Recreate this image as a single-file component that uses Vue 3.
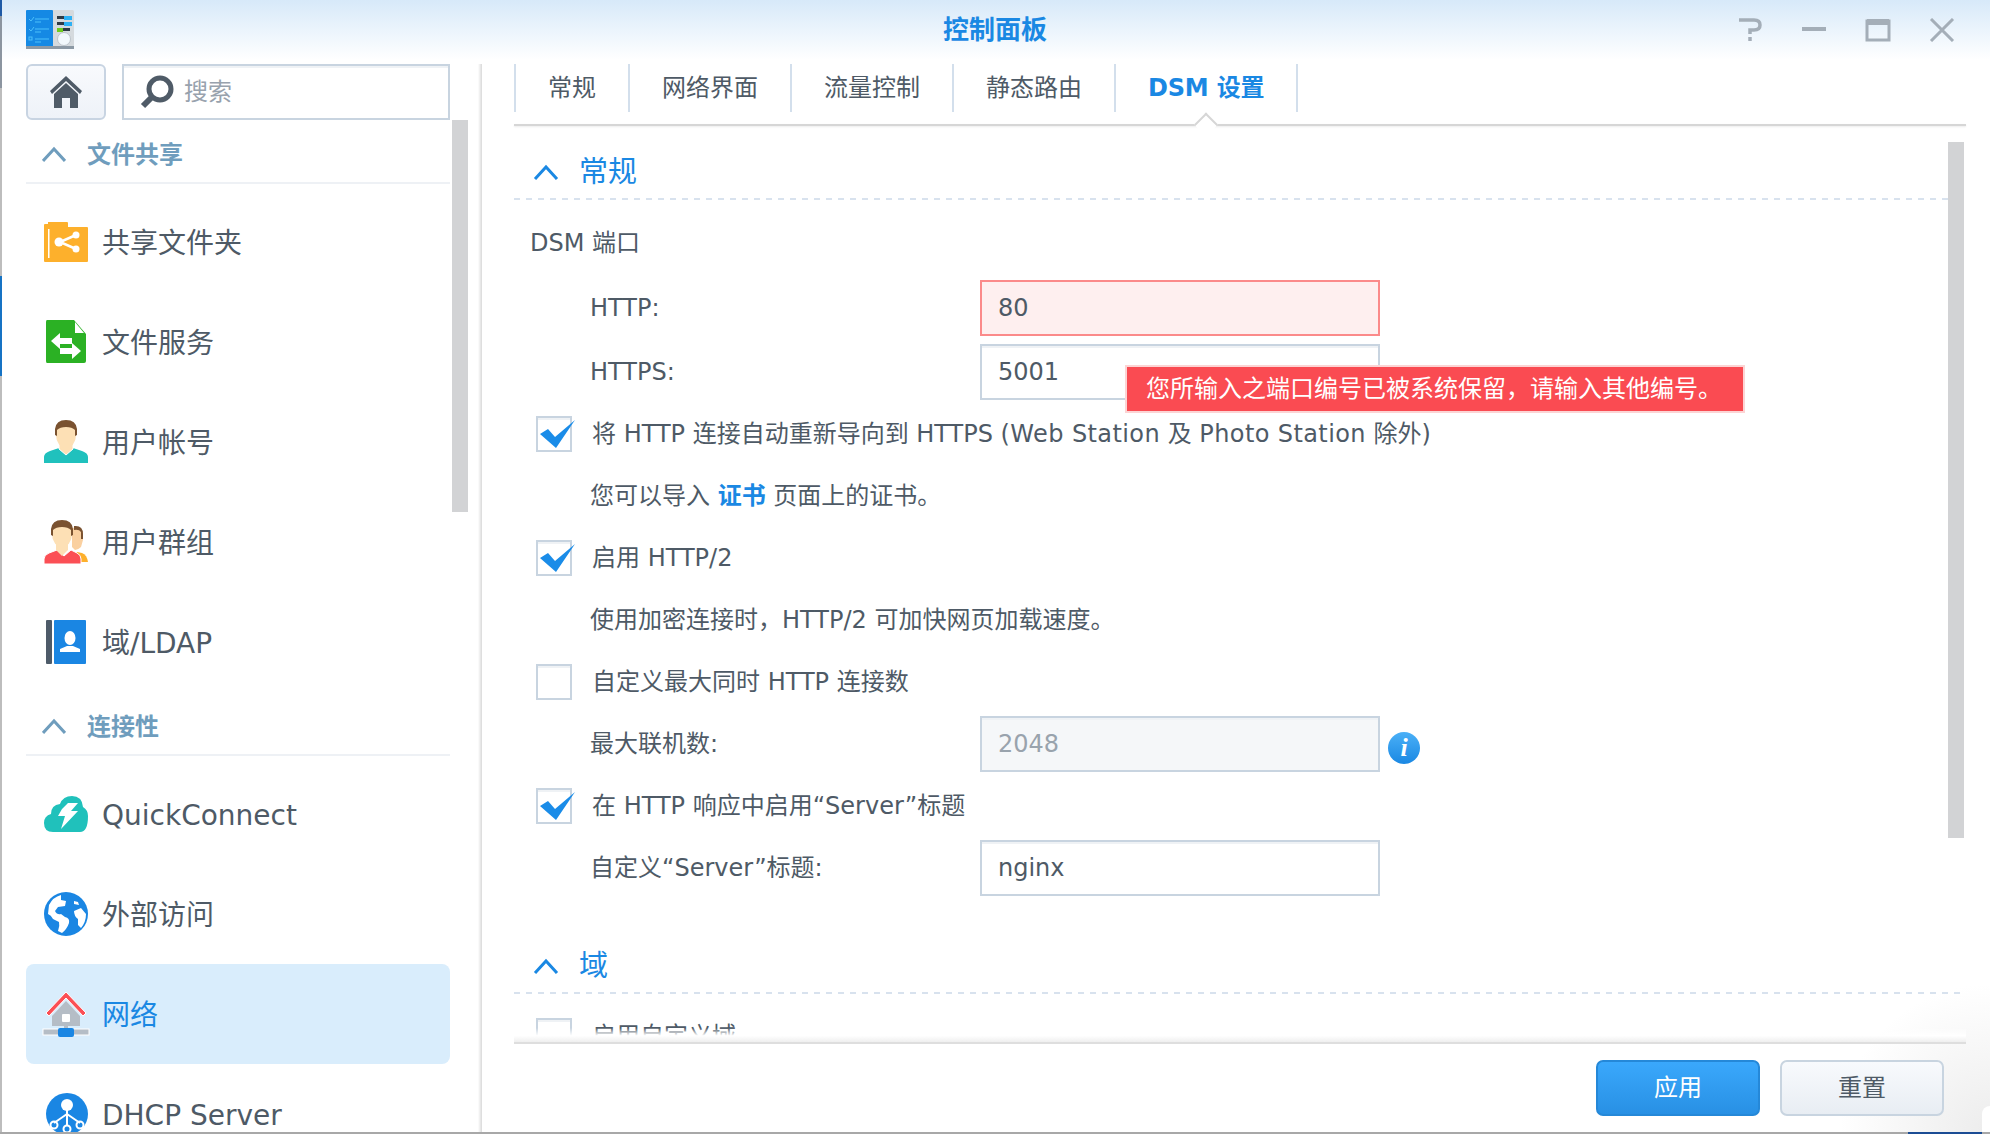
<script setup>
const groups = [
  {
    title: "文件共享",
    items: [
      { icon: "share", label: "共享文件夹" },
      { icon: "file", label: "文件服务" },
      { icon: "user", label: "用户帐号" },
      { icon: "group", label: "用户群组" },
      { icon: "ldap", label: "域/LDAP" },
    ],
  },
  {
    title: "连接性",
    items: [
      { icon: "quick", label: "QuickConnect" },
      { icon: "globe", label: "外部访问" },
      { icon: "network", label: "网络", active: true },
      { icon: "dhcp", label: "DHCP Server" },
    ],
  },
];

const tabs = ["常规", "网络界面", "流量控制", "静态路由", "DSM 设置"];
</script>

<template>
  <div class="window">
    <header class="titlebar">
      <div class="titlebar__left">
        <svg class="app-icon" width="48" height="40" viewBox="0 0 48 40">
          <rect x="0" y="0" width="48" height="39" rx="1.5" fill="#d5dade" />
          <rect x="0" y="0" width="27" height="39" rx="1" fill="#1589e4" />
          <rect x="0" y="36" width="48" height="3" fill="#8c99a5" />
          <g stroke="#4cc0fa" stroke-width="1" fill="none">
            <path d="M3 9l2 2 3-4M3 19l2 2 3-4" />
            <rect x="3" y="27" width="3" height="3" />
            <path d="M9 9h14M9 12h6M9 19h14M9 22h6M9 29h14M9 32h6" />
          </g>
          <rect x="31" y="6" width="13" height="3" fill="#2f3a45" />
          <rect x="38" y="6" width="8" height="4" fill="#2db1f5" />
          <rect x="31" y="12" width="13" height="3" fill="#2f3a45" />
          <rect x="38" y="12" width="8" height="4" fill="#2db1f5" />
          <rect x="31" y="18" width="13" height="3" fill="#2f3a45" />
          <rect x="31" y="18" width="6" height="4" fill="#6ecb1f" />
          <circle cx="38" cy="29" r="6.5" fill="#f2f8fc" stroke="#bcc4cb" />
        </svg>
      </div>
      <h1 class="titlebar__title">控制面板</h1>
      <div class="titlebar__controls">
        <svg width="26" height="24" viewBox="0 0 26 24" fill="none" stroke="#a4aeb8" stroke-width="3.5">
          <path d="M2 2h15q6 0 6 5t-6 5h-4v4" />
          <path d="M13 19v4" />
        </svg>
        <svg width="26" height="24" viewBox="0 0 26 24" fill="none" stroke="#a4aeb8" stroke-width="4">
          <path d="M1 11h24" />
        </svg>
        <svg width="26" height="24" viewBox="0 0 26 24" fill="none" stroke="#a4aeb8">
          <rect x="2" y="3" width="22" height="19" stroke-width="3" />
          <path d="M2 4h22" stroke-width="6" />
        </svg>
        <svg width="26" height="24" viewBox="0 0 26 24" fill="none" stroke="#a4aeb8" stroke-width="3">
          <path d="M2 1l22 22M24 1L2 23" />
        </svg>
      </div>
    </header>

    <div class="body">
      <aside class="sidebar">
        <div class="sidebar__head">
          <button class="home-btn">
            <svg width="32" height="32" viewBox="0 0 32 32">
              <path d="M16 0L32 15l-2 3L16 5 2 18l-2-3z" fill="#4f5b67" />
              <path d="M4 18L16 7l12 11v14H20V22h-8v10H4z" fill="#4f5b67" />
            </svg>
          </button>
          <div class="search">
            <svg width="34" height="34" viewBox="0 0 34 34" fill="none" stroke="#4f5b67">
              <circle cx="20" cy="14" r="11" stroke-width="5" />
              <path d="M11 23L3 31" stroke-width="6" />
            </svg>
            <span>搜索</span>
          </div>
        </div>
        <div class="scrollbar scrollbar--side"></div>
        <div class="nav">
          <section v-for="group in groups" :key="group.title">
            <div class="nav__title">
              <svg width="24" height="16" viewBox="0 0 24 16" fill="none" stroke="#6f9dbd" stroke-width="3">
                <path d="M1 15L12 3l11 12" />
              </svg>
              <span>{{ group.title }}</span>
            </div>
            <div class="nav__items">
              <div v-for="item in group.items" :key="item.label" class="nav-item" :class="{ 'nav-item--active': item.active }">
                <svg class="nav-item__icon" width="44" height="44" viewBox="0 0 44 44">
                  <template v-if="item.icon === 'share'">
                    <path d="M1 4h3V2h19q1 0 1 1v4h19q1 0 1 1v33q0 1-1 1H1q-1 0-1-1V5q0-1 1-1z" fill="#fdb02c" />
                    <rect x="4" y="9" width="1.5" height="29" fill="#fff" />
                    <path d="M32 15L16 22l16 7" stroke="#fff" stroke-width="2.5" fill="none" />
                    <circle cx="15" cy="22" r="4.5" fill="#fff" />
                    <circle cx="32" cy="15" r="3.5" fill="#fff" />
                    <circle cx="32" cy="29" r="3.5" fill="#fff" />
                  </template>
                  <template v-else-if="item.icon === 'file'">
                    <path d="M3 0h27l12 14v27q0 2-2 2H3q-1 0-1-2V2q0-2 1-2z" fill="#2bb124" />
                    <path d="M31 2l9 11h-9z" fill="#fff" />
                    <path d="M7 21l9-8v5h12v6H16v5zM37 31l-9-8v5H16v6h12v5z" fill="#fff" />
                  </template>
                  <template v-else-if="item.icon === 'user'">
                    <path d="M0 43v-6q0-4 6-6l9-3 7 6 7-6 9 3q6 2 6 6v6z" fill="#20c1bd" />
                    <path d="M15 22h14v7l-7 6-7-6z" fill="#fde0b5" stroke="#fff" stroke-width="1" />
                    <ellipse cx="22" cy="15" rx="10" ry="13" fill="#fde0b5" />
                    <path d="M11 15V9Q12 0 22 0t11 9v6l-2 1v-6q-3-3-9-3t-9 3v6z" fill="#7a5230" />
                  </template>
                  <template v-else-if="item.icon === 'group'">
                    <path d="M30 38l3-6 5 1q5 2 6 9H32z" fill="#fdb02c" />
                    <path d="M28 8q10-2 11 6v6l-2 7q-3 3-6 3l-3-3z" fill="#fad0a0" />
                    <path d="M30 6q9-1 9 8v5l-2 0v-7q-2-3-7-2z" fill="#7a5230" />
                    <path d="M0 44v-5q0-4 5-6l8-3 7 6 7-6 6 3q4 2 4 6v5z" fill="#fb4f55" stroke="#fff" stroke-width="1" />
                    <path d="M12 22h12v8l-6 6-6-6z" fill="#fde0b5" />
                    <ellipse cx="18" cy="14" rx="10" ry="13" fill="#fde0b5" />
                    <path d="M7 15V9Q8 0 18 0t11 9v6l-2 1v-6q-3-3-9-3t-9 3v6z" fill="#7a5230" />
                  </template>
                  <template v-else-if="item.icon === 'ldap'">
                    <rect x="2" y="0" width="6" height="44" rx="1" fill="#4e5b69" />
                    <rect x="10" y="0" width="32" height="44" rx="1" fill="#1a86e3" />
                    <ellipse cx="26" cy="18" rx="5.5" ry="7" fill="#fff" />
                    <path d="M16 32v-3l7-3h6l7 3v3z" fill="#fff" />
                  </template>
                  <template v-else-if="item.icon === 'quick'">
                    <path d="M9 40q-9 0-9-9 0-7 7-9 0-9 9-10 3-8 12-8 10 0 11 11 5 3 5 9 0 16-8 16z" fill="#20c1bb" />
                    <path d="M18 17l6-6h10l-7 8h7L17 37l4-13h-7z" fill="#fff" />
                  </template>
                  <template v-else-if="item.icon === 'globe'">
                    <circle cx="22" cy="22" r="22" fill="#1a86e3" />
                    <path d="M17 3q-8 2-12 10l-1 9q3 1 5 5l6 3q1 4-1 9l4 2q5-4 7-10 1-5-4-6l-4-3q-4 1-6-3l3-4 7-1 1-5-5-1z" fill="#fff" />
                    <path d="M30 19l7-3 5 6q0 8-5 14l-3-3v-6q-4-3-4-8zM30 9l4 1 1 3-5-1z" fill="#fff" />
                  </template>
                  <template v-else-if="item.icon === 'network'">
                    <path d="M8 24L22 9l14 15v10H8z" fill="#b5bdc6" />
                    <path d="M22 0L42 21l-3 3L22 6 5 24l-3-3z" fill="#fb4f55" stroke="#fff" stroke-width="1" />
                    <rect x="18" y="22" width="8" height="8" rx="1" fill="#fff" />
                    <rect x="20" y="34" width="4" height="4" fill="#b5bdc6" />
                    <rect x="-1" y="37" width="46" height="6" fill="#b5bdc6" stroke="#fff" />
                    <rect x="14" y="36" width="16" height="9" rx="2" fill="#1a86e3" />
                  </template>
                  <template v-else-if="item.icon === 'dhcp'">
                    <circle cx="23" cy="22" r="21" fill="#1a86e3" />
                    <circle cx="23" cy="13" r="6" fill="#fff" />
                    <path d="M23 18v16M23 22L10 31M23 22l13 9" stroke="#fff" stroke-width="2" />
                    <g fill="none" stroke="#fff" stroke-width="2">
                      <circle cx="10" cy="33" r="3.5" />
                      <circle cx="23" cy="37" r="3.5" />
                      <circle cx="36" cy="33" r="3.5" />
                    </g>
                  </template>
                </svg>
                <span>{{ item.label }}</span>
              </div>
            </div>
          </section>
        </div>
      </aside>

      <main class="main">
        <nav class="tabs">
          <div v-for="(tab, i) in tabs" :key="tab" class="tab" :class="{ 'tab--active': i === tabs.length - 1 }">{{ tab }}</div>
        </nav>

        <div class="content">
          <div class="section-head">
            <svg width="26" height="16" viewBox="0 0 26 16" fill="none" stroke="#1a88e3" stroke-width="3">
              <path d="M2 15L13 3l11 12" />
            </svg>
            <span>常规</span>
          </div>

          <div class="form">
            <div class="row row--title">DSM 端口</div>
            <div class="row row--http">
              <label class="field-label">HTTP:</label>
              <div class="input input--error">80</div>
            </div>
            <div class="row">
              <label class="field-label">HTTPS:</label>
              <div class="input">
                5001
                <div class="tooltip">您所输入之端口编号已被系统保留，请输入其他编号。</div>
              </div>
            </div>
            <div class="row">
              <span class="checkbox">
                <svg width="36" height="29" viewBox="0 0 36 29"><path d="M0 14L8 9l7 8L35 0 16 28z" fill="#1a8ce8" /></svg>
              </span>
              <span class="check-text">将 HTTP 连接自动重新导向到 HTTPS <span class="wide">(Web Station</span> 及 <span class="wide">Photo Station</span> 除外)</span>
            </div>
            <div class="row row--note">您可以导入 <a class="link">证书</a> 页面上的证书。</div>
            <div class="row">
              <span class="checkbox">
                <svg width="36" height="29" viewBox="0 0 36 29"><path d="M0 14L8 9l7 8L35 0 16 28z" fill="#1a8ce8" /></svg>
              </span>
              <span class="check-text">启用 HTTP/2</span>
            </div>
            <div class="row row--note">使用加密连接时，HTTP/2 可加快网页加载速度。</div>
            <div class="row">
              <span class="checkbox"></span>
              <span class="check-text">自定义最大同时 HTTP 连接数</span>
            </div>
            <div class="row">
              <label class="field-label">最大联机数:</label>
              <div class="input input--disabled">2048</div>
              <span class="info">i</span>
            </div>
            <div class="row">
              <span class="checkbox">
                <svg width="36" height="29" viewBox="0 0 36 29"><path d="M0 14L8 9l7 8L35 0 16 28z" fill="#1a8ce8" /></svg>
              </span>
              <span class="check-text">在 HTTP 响应中启用“Server”标题</span>
            </div>
            <div class="row">
              <label class="field-label">自定义“Server”标题:</label>
              <div class="input">nginx</div>
            </div>
          </div>

          <div class="section-head section-head--next">
            <svg width="26" height="16" viewBox="0 0 26 16" fill="none" stroke="#1a88e3" stroke-width="3">
              <path d="M2 15L13 3l11 12" />
            </svg>
            <span>域</span>
          </div>

          <div class="form form--next">
            <div class="row">
              <span class="checkbox"></span>
              <span class="check-text">启用自定义域</span>
            </div>
          </div>

          <div class="scrollbar scrollbar--main"></div>
          <div class="content__fade"></div>
        </div>

        <footer class="footer">
          <button class="btn btn--primary">应用</button>
          <button class="btn">重置</button>
        </footer>
      </main>
    </div>

    <div class="edge edge--left"></div>
    <div class="edge edge--bottom"></div>
    <div class="corner"></div>
  </div>
</template>

<style>
html,
body {
  margin: 0;
  background: #fff;
}
</style>

<style scoped>
.window {
  position: relative;
  width: 1990px;
  height: 1134px;
  overflow: hidden;
  display: flex;
  flex-direction: column;
  background: #fff;
  color: #4e5a66;
  font-family: "DejaVu Sans", "Noto Sans CJK SC", sans-serif;
  font-size: 24px;
  line-height: 30px;
}

.titlebar {
  flex: 0 0 64px;
  display: grid;
  grid-template-columns: 1fr auto 1fr;
  align-items: center;
  padding: 0 35px 4px;
  box-sizing: border-box;
  background: linear-gradient(#d7e9f9, #fff 60px);
}

.app-icon {
  display: block;
  margin-left: -9px;
}

.titlebar__title {
  margin: 0;
  font-size: 26px;
  font-weight: 700;
  color: #1a88e3;
}

.titlebar__controls {
  display: flex;
  justify-content: flex-end;
  gap: 38px;
}

.body {
  flex: 1;
  display: flex;
  min-height: 0;
  background: radial-gradient(circle 150px at 100% 100%, #ececec, #fff);
}

.sidebar {
  position: relative;
  flex: 0 0 482px;
  box-sizing: border-box;
  padding-left: 26px;
  padding-right: 32px;
  display: flex;
  flex-direction: column;
  background: linear-gradient(to right, #fff 478px, #d9d9d9 482px);
}

.sidebar__head {
  flex: 0 0 56px;
  display: flex;
  gap: 16px;
}

.home-btn {
  width: 80px;
  height: 56px;
  padding: 0;
  display: flex;
  align-items: center;
  justify-content: center;
  border: 2px solid #c8d4e2;
  border-radius: 6px;
  background: linear-gradient(#f8fafd, #eef2f8);
}

.search {
  flex: 1;
  display: flex;
  align-items: center;
  gap: 10px;
  box-sizing: border-box;
  padding-left: 16px;
  border: 2px solid #c8d4e0;
  box-shadow: inset 0 2px 0 #eff2f5;
  color: #98a2ad;
}

.scrollbar {
  position: absolute;
  background: #d2d3d5;
}

.scrollbar--side {
  left: 452px;
  top: 56px;
  width: 16px;
  height: 392px;
}

.scrollbar--main {
  right: 2px;
  top: 16px;
  width: 16px;
  height: 696px;
}

.nav {
  flex: 1;
  min-height: 0;
  overflow: hidden;
}

.nav__title {
  height: 64px;
  box-sizing: border-box;
  display: flex;
  align-items: center;
  gap: 21px;
  padding: 6px 0 0 16px;
  border-bottom: 2px solid #eef1f5;
  color: #6f9dbd;
  font-weight: 700;
}

.nav__title span {
  padding-top: 2px;
}

.nav__items {
  padding-top: 8px;
}

.nav-item {
  height: 100px;
  display: flex;
  align-items: center;
  gap: 14px;
  padding-left: 18px;
  border-radius: 8px;
  font-size: 28px;
}

.nav-item span {
  padding-top: 3px;
}

.nav-item--active {
  background: #d9edfc;
  color: #1a88e3;
}

.nav-item__icon {
  overflow: visible;
  flex: none;
}

.main {
  flex: 1;
  min-width: 0;
  display: flex;
  flex-direction: column;
  padding: 0 24px 0 32px;
}

.tabs {
  flex: 0 0 48px;
  display: flex;
  margin-bottom: 12px;
  position: relative;
}

.tabs::after {
  content: "";
  position: absolute;
  left: 0;
  right: 0;
  top: 60px;
  height: 2px;
  background: #d6d6d6;
  box-shadow: 0 1px 2px rgba(0, 0, 0, 0.08);
}

.tab {
  position: relative;
  display: flex;
  align-items: center;
  padding: 0 32px;
  border-left: 2px solid #d3dfec;
}

.tab--active {
  border-right: 2px solid #d3dfec;
  color: #1a88e3;
  font-weight: 700;
  letter-spacing: -0.2px;
}

.tab--active::after {
  content: "";
  position: absolute;
  z-index: 1;
  left: 50%;
  top: 52px;
  width: 15px;
  height: 15px;
  background: #fff;
  border-top: 2px solid #d6d6d6;
  border-left: 2px solid #d6d6d6;
  transform: translateX(-50%) rotate(45deg);
}

.content {
  position: relative;
  flex: 1;
  min-height: 0;
  margin-top: 2px;
  overflow: hidden;
}

.section-head {
  height: 74px;
  box-sizing: border-box;
  display: flex;
  align-items: center;
  gap: 20px;
  padding: 18px 0 0 19px;
  color: #1a88e3;
  font-size: 29px;
  background: repeating-linear-gradient(to right, #d8e2ee 0 6px, transparent 6px 12px) left bottom / 100% 2px no-repeat;
}

.section-head--next {
  margin-top: 24px;
}

.form {
  padding-left: 16px;
}

.form--next {
  margin-top: 14px;
}

.row {
  height: 56px;
  margin-bottom: 6px;
  display: flex;
  align-items: center;
}

.row--title {
  margin-top: 15px;
  margin-bottom: 9px;
}

.row--http {
  margin-bottom: 8px;
}

.row--note {
  padding-left: 60px;
  white-space: pre-wrap;
}

.field-label {
  flex: 0 0 390px;
  margin-left: 60px;
}

.input {
  position: relative;
  flex: 0 0 400px;
  box-sizing: border-box;
  height: 56px;
  line-height: 52px;
  padding-left: 16px;
  border: 2px solid #c8d4e0;
  box-shadow: inset 0 2px 0 #eff2f5;
  background: #fff;
}

.input--error {
  border-color: #fb8a8a;
  background: #feefef;
  box-shadow: none;
}

.input--disabled {
  background: #f5f7f9;
  color: #99a3ad;
}

.tooltip {
  position: absolute;
  z-index: 2;
  left: 143px;
  top: 19px;
  width: 620px;
  height: 48px;
  box-sizing: border-box;
  padding-left: 19px;
  line-height: 44px;
  background: #fa4b52;
  border: 2px solid #fcd4d4;
  color: #fff;
  white-space: nowrap;
}

.info {
  flex: none;
  width: 32px;
  height: 32px;
  margin: 8px 0 0 8px;
  border-radius: 50%;
  background: linear-gradient(#4ab0f7, #1a88e3);
  color: #fff;
  text-align: center;
  line-height: 32px;
  font-family: "Liberation Serif", serif;
  font-style: italic;
  font-weight: 700;
  font-size: 26px;
}

.checkbox {
  position: relative;
  flex: none;
  width: 36px;
  height: 36px;
  box-sizing: border-box;
  margin-left: 6px;
  border: 2px solid #c8d4e0;
  box-shadow: inset 0 2px 0 #eff2f5;
}

.checkbox svg {
  position: absolute;
  left: 2px;
  top: 2px;
  overflow: visible;
}

.check-text {
  margin-left: 20px;
  white-space: nowrap;
}

.wide {
  letter-spacing: 0.4px;
}

.link {
  color: #1a88e3;
  font-weight: 700;
}

.content__fade {
  position: absolute;
  left: 0;
  right: 0;
  bottom: 0;
  height: 14px;
  background: linear-gradient(rgba(255, 255, 255, 0), #fff 55%, #efefef);
}

.footer {
  flex: 0 0 92px;
  box-sizing: border-box;
  display: flex;
  justify-content: flex-end;
  align-items: flex-start;
  gap: 20px;
  padding: 16px 22px 0 0;
  border-top: 2px solid #dedede;
}

.btn {
  width: 164px;
  height: 56px;
  padding: 0;
  border: 2px solid #c8d4e0;
  border-radius: 7px;
  background: linear-gradient(#f8fafd, #e8edf3);
  color: #4e5a66;
  font: inherit;
}

.btn--primary {
  border-color: #2588d8;
  background: linear-gradient(#3aa8fc, #2890e4);
  color: #fff;
}

.edge {
  position: absolute;
  z-index: 3;
}

.edge--left {
  left: 0;
  top: 0;
  bottom: 0;
  width: 2px;
  background: linear-gradient(#1f5aa6 0 16px, #8c95a0 16px 88px, #bdbdbd 88px 276px, #1673c4 276px 376px, #bdbdbd 376px);
}

.edge--bottom {
  left: 0;
  right: 0;
  bottom: 0;
  height: 2px;
  background: linear-gradient(to right, #a8a8a8 0 1908px, #1b4c94 1908px 1982px, #a8a8a8 1982px);
}

.corner {
  position: absolute;
  z-index: 2;
  right: 0;
  bottom: 2px;
  width: 8px;
  height: 26px;
  background: #fff;
  border-radius: 8px 0 0 0;
}
</style>
